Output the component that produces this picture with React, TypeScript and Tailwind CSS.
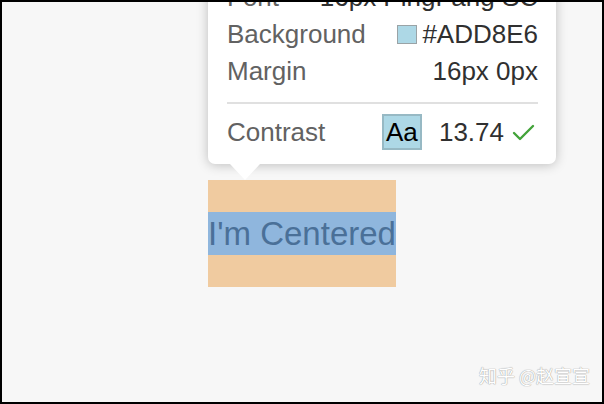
import React from "react";

const font = { fontFamily: '"Liberation Sans", Arial, sans-serif' };

function Row({ label, children }: { label: string; children: React.ReactNode }) {
  return (
    <div className="flex h-[37px] items-center justify-between leading-[37px]">
      <span className="text-[#626262]">{label}</span>
      <span className="flex items-center text-[#303030]">{children}</span>
    </div>
  );
}

export default function App() {
  return (
    <div
      className="relative h-[404px] w-[604px] overflow-hidden border-2 border-black bg-[#f7f7f7]"
      style={font}
    >
      <div className="flex justify-center pt-[178px]">
        <div className="relative">
          {/* tooltip */}
          <div className="absolute bottom-[calc(100%+16px)] left-0 w-[348px] rounded-[7px] bg-white pl-[19px] pr-[18px] pb-[14px] pt-3 text-[26px] shadow-[0_1px_12px_rgba(0,0,0,0.24)]">
            <Row label="Font">16px PingFang SC</Row>
            <Row label="Background">
              <span className="mr-[5px] inline-block h-[19px] w-[20px] border border-[#9aa3a6] bg-[#ADD8E6]" />
              #ADD8E6
            </Row>
            <Row label="Margin">16px 0px</Row>
            <div className="mt-[12px] h-[2px] bg-[#e0e0e0]" />
            <div className="mt-[10px] flex h-[36px] items-center justify-between">
              <span className="text-[#626262]">Contrast</span>
              <div className="mr-[3px] flex items-center">
                <span className="flex h-[36px] w-[40px] items-center justify-center border-2 border-[#97b9c4] bg-[#ADD8E6] text-black leading-none">
                  Aa
                </span>
                <span className="ml-[17px] text-[#303030]">13.74</span>
                <svg
                  className="ml-[8px]"
                  width="23"
                  height="17"
                  viewBox="0 0 23 17"
                  fill="none"
                  stroke="#43a33a"
                  strokeWidth="2.4"
                  strokeLinecap="round"
                  strokeLinejoin="round"
                >
                  <polyline points="2,9 8,15 21,2" />
                </svg>
              </div>
            </div>
            <div className="absolute left-[22px] top-full h-0 w-0 border-l-[15px] border-r-[15px] border-t-[16px] border-l-transparent border-r-transparent border-t-white" />
          </div>
          {/* element */}
          <div className="w-[188px] bg-[#f0cba0] py-[32px]">
            <div className="h-[43px] whitespace-nowrap bg-[#8fb6dd] text-center text-[33px] leading-[43px] text-[#4a7098]">
              I'm Centered
            </div>
          </div>
        </div>
      </div>
      <div
        className="absolute bottom-[13px] right-[12px] text-[18px] text-white"
        style={{
          fontFamily: '"Noto Sans CJK SC", "Liberation Sans", sans-serif',
          textShadow: "0 0 1px #a0a0a0, 0 0 1px #a0a0a0",
        }}
      >
        知乎 @赵宣宣
      </div>
    </div>
  );
}
